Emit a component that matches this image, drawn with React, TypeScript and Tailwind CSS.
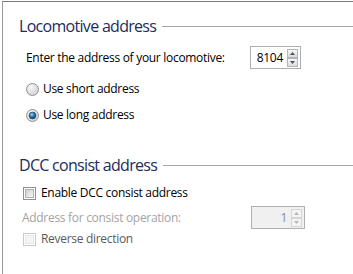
import React from "react";

const font = { fontFamily: '"Open Sans", "Noto Sans", Arial, sans-serif' };

function Radio({ checked }: { checked?: boolean }) {
  return (
    <svg width="13" height="13" viewBox="0 0 13 13" className="shrink-0">
      <defs>
        <radialGradient id="rfill" cx="0.35" cy="0.3" r="0.8">
          <stop offset="0" stopColor="#f8f8f8" />
          <stop offset="1" stopColor="#cdcdcd" />
        </radialGradient>
        <radialGradient id="rdot" cx="0.4" cy="0.35" r="0.7">
          <stop offset="0" stopColor="#9ad8f5" />
          <stop offset="0.5" stopColor="#2a77b0" />
          <stop offset="1" stopColor="#0f3456" />
        </radialGradient>
      </defs>
      <circle cx="6.5" cy="6.5" r="6" fill="url(#rfill)" stroke="#929292" strokeWidth="1" />
      {checked && <circle cx="6.5" cy="6.5" r="3.4" fill="url(#rdot)" stroke="#183c5c" strokeWidth="0.6" />}
    </svg>
  );
}

function Checkbox({ disabled }: { disabled?: boolean }) {
  return (
    <div
      className={
        "box-border flex h-[13px] w-[13px] shrink-0 items-center justify-center border " +
        (disabled ? "border-[#c9c9c9] bg-white" : "border-[#8e8f8f] bg-white")
      }
    >
      <div
        className={
          "h-[9px] w-[9px] border " +
          (disabled
            ? "border-[#e6e6e6] bg-[#f4f4f4]"
            : "border-[#aeb0b2] bg-gradient-to-br from-[#cfd0d2] to-[#f7f7f7]")
        }
      />
    </div>
  );
}

function Arrow({ up, disabled }: { up?: boolean; disabled?: boolean }) {
  return (
    <div
      className={
        "flex h-[9px] w-[11px] items-center justify-center border " +
        (disabled
          ? "border-[#d5d5d5] bg-[#f4f4f4]"
          : "border-[#b6b6b6] bg-gradient-to-b from-[#f6f6f6] to-[#dcdcdc]")
      }
    >
      <svg width="5" height="3" viewBox="0 0 5 3">
        <path
          d={up ? "M0 3 L2.5 0 L5 3 Z" : "M0 0 L2.5 3 L5 0 Z"}
          fill={disabled ? "#b8b8b8" : "#4a5566"}
        />
      </svg>
    </div>
  );
}

function Spin({ value, disabled, wide }: { value: string; disabled?: boolean; wide?: boolean }) {
  return (
    <div
      className={
        "box-border flex h-[23px] items-center border " +
        (wide ? "w-[54px] " : "w-[51px] ") +
        (disabled ? "border-[#b0b0b0] bg-[#f0f0f0]" : "border-[#abadb3] bg-white")
      }
    >
      <span
        className={
          "flex-1 pr-[4px] text-right text-[12px] leading-[16px] " +
          (disabled ? "text-[#8a8a8a]" : "text-black")
        }
      >
        {value}
      </span>
      <div className="mr-[2px] flex flex-col gap-0">
        <Arrow up disabled={disabled} />
        <Arrow disabled={disabled} />
      </div>
    </div>
  );
}

function Heading({ title }: { title: string }) {
  return (
    <div className="flex h-[22px] items-center">
      <span className="ml-[16px] text-[16px] leading-[22px] tracking-[-0.7px] text-[#1b2d5c]">{title}</span>
      <div className="ml-[6px] h-px flex-1 bg-[#a8a8a8]" />
    </div>
  );
}

export default function App() {
  return (
    <div className="h-[274px] w-[353px] overflow-hidden bg-white pl-[2px] pt-[1px]" style={font}>
      <div className="flex h-[280px] flex-col border-l border-t border-l-[#9a9a9a] border-t-[#7a7a7a]">
        <div className="mt-[13px]">
          <Heading title="Locomotive address" />
        </div>

        <div className="mt-[9px] flex h-[23px] items-center tracking-[-0.3px]">
          <span className="ml-[23px] w-[224px] text-[12px] leading-[16px] text-black">
            Enter the address of your locomotive:
          </span>
          <Spin value="8104" />
        </div>

        <label className="mt-[12px] flex h-[16px] items-center tracking-[-0.3px]">
          <span className="ml-[23px]"><Radio /></span>
          <span className="ml-[4px] text-[12px] leading-[16px] text-black">Use short address</span>
        </label>

        <label className="mt-[10px] flex h-[16px] items-center tracking-[-0.3px]">
          <span className="ml-[23px]"><Radio checked /></span>
          <span className="ml-[4px] text-[12px] leading-[16px] text-black">Use long address</span>
        </label>

        <div className="mt-[31px]">
          <Heading title="DCC consist address" />
        </div>

        <label className="mt-[9px] flex h-[16px] items-center tracking-[-0.3px]">
          <span className="ml-[20px]"><Checkbox /></span>
          <span className="ml-[5px] text-[12px] leading-[16px] text-black">Enable DCC consist address</span>
        </label>

        <div className="mt-[5px] flex h-[23px] items-center tracking-[-0.3px]">
          <span className="ml-[19px] w-[229px] text-[12px] leading-[16px] text-[#a3a3a3]">
            Address for consist operation:
          </span>
          <Spin value="1" disabled wide />
        </div>

        <label className="mt-[2px] flex h-[16px] items-center tracking-[-0.3px]">
          <span className="ml-[20px]"><Checkbox disabled /></span>
          <span className="ml-[5px] text-[12px] leading-[16px] text-[#5a5a5a]">Reverse direction</span>
        </label>
      </div>
    </div>
  );
}
